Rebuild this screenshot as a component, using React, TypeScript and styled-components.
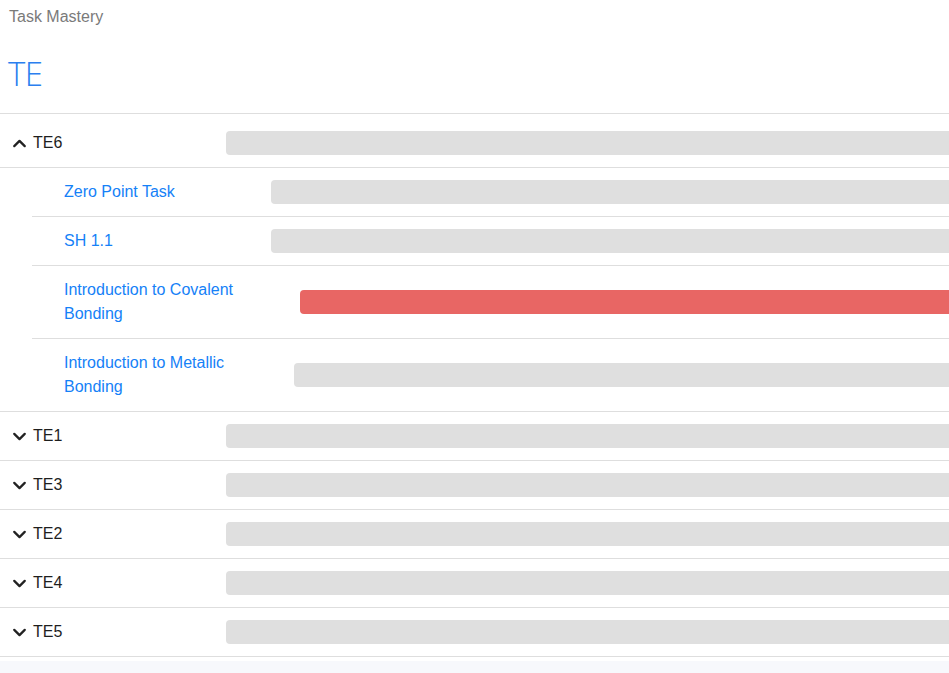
import React, {useState} from 'react'
import styled, {createGlobalStyle} from 'styled-components'
import {ChevronDown, ChevronUp} from 'lucide-react'

const GlobalStyle = createGlobalStyle`
  html, body {
    margin: 0;
    padding: 0;
    background: #f7f8fc;
    overflow-x: hidden;
  }
  body {
    font-family: "Liberation Sans", Arial, sans-serif;
  }
`

const Page = styled.div`
  background: #ffffff;
  padding-bottom: 4px;
`

const Crumb = styled.div`
  padding: 7px 9px 0;
  font-size: 16px;
  line-height: 20px;
  color: #7a7a7a;
`

const Title = styled.h1`
  margin: 0;
  padding: 28px 8px 20px;
  font-family: "Open Sans", "Liberation Sans", sans-serif;
  font-weight: 300;
  font-size: 33px;
  line-height: 38px;
  letter-spacing: -0.5px;
  color: #2b7fef;
`

const List = styled.div`
  border-top: 1px solid #dedede;
`

const GroupRow = styled.div<{$top: number; $bottom: number}>`
  display: flex;
  align-items: center;
  padding: ${({$top, $bottom}) => `${$top}px 0 ${$bottom}px`};
  border-bottom: 1px solid #dedede;
`

const GroupName = styled.button`
  display: flex;
  align-items: center;
  gap: 3px;
  width: 226px;
  flex-shrink: 0;
  padding: 0 0 0 9px;
  border: none;
  background: none;
  font-family: "Liberation Sans", Arial, sans-serif;
  font-size: 16px;
  line-height: 24px;
  color: #1e1e1e;
  text-align: left;
  cursor: pointer;
  svg {
    color: #222;
  }
`

const Children = styled.div`
  padding-left: 32px;
  border-bottom: 1px solid #dedede;
`

const TaskRow = styled.div`
  display: flex;
  align-items: center;
  padding: 12px 0;
  & + & {
    border-top: 1px solid #dedede;
  }
`

const TaskName = styled.a<{$width: number}>`
  width: ${({$width}) => $width}px;
  flex-shrink: 0;
  box-sizing: border-box;
  padding: 0 40px 0 32px;
  font-size: 16px;
  line-height: 24px;
  color: #1581f7;
  text-decoration: none;
  cursor: pointer;
`

const Bar = styled.div<{$tone: 'empty' | 'late'}>`
  flex: 1;
  height: 24px;
  margin-right: -12px;
  border-radius: 4px;
  background: ${({$tone}) => ($tone === 'late' ? '#e86664' : '#dfdfdf')};
`

type Task = {name: string; width: number; tone: 'empty' | 'late'}

const te6Tasks: Task[] = [
    {name: 'Zero Point Task', width: 239, tone: 'empty'},
    {name: 'SH 1.1', width: 239, tone: 'empty'},
    {name: 'Introduction to Covalent Bonding', width: 268, tone: 'late'},
    {name: 'Introduction to Metallic Bonding', width: 262, tone: 'empty'},
]

const groups = [
    {name: 'TE6', tasks: te6Tasks},
    {name: 'TE1', tasks: []},
    {name: 'TE3', tasks: []},
    {name: 'TE2', tasks: []},
    {name: 'TE4', tasks: []},
    {name: 'TE5', tasks: []},
]

const App = () => {
    const [open, setOpen] = useState<string | null>('TE6')

    return (
        <Page>
            <GlobalStyle/>
            <Crumb>Task Mastery</Crumb>
            <Title>TE</Title>
            <List>
                {groups.map((group) => {
                    const expanded = open === group.name
                    return (
                        <React.Fragment key={group.name}>
                            <GroupRow $top={expanded ? 17 : 12} $bottom={12}>
                                <GroupName onClick={() => setOpen(expanded ? null : group.name)}>
                                    {expanded
                                        ? <ChevronUp size={21} strokeWidth={2.6}/>
                                        : <ChevronDown size={21} strokeWidth={2.6}/>}
                                    {group.name}
                                </GroupName>
                                <Bar $tone="empty"/>
                            </GroupRow>
                            {expanded && group.tasks.length > 0 && (
                                <Children>
                                    {group.tasks.map((task) => (
                                        <TaskRow key={task.name}>
                                            <TaskName $width={task.width}>{task.name}</TaskName>
                                            <Bar $tone={task.tone}/>
                                        </TaskRow>
                                    ))}
                                </Children>
                            )}
                        </React.Fragment>
                    )
                })}
            </List>
        </Page>
    )
}

export default App
